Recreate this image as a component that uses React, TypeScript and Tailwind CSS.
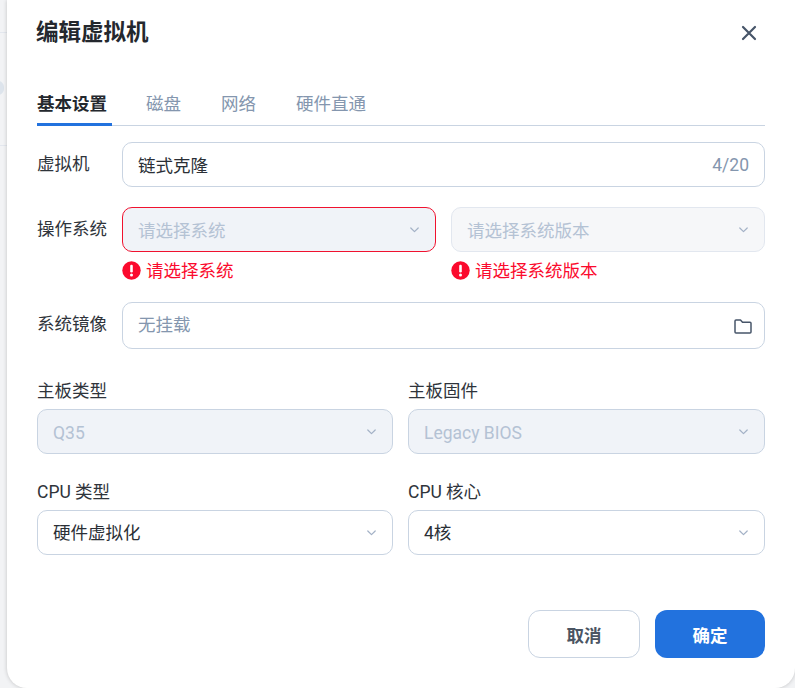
import { ReactNode } from "react";

const Chevron = () => (
  <svg width="9" height="6" viewBox="0 0 9 6" fill="none" className="shrink-0">
    <path d="M.8 1l3.7 3.7L8.2 1" stroke="#a3b1c6" strokeWidth="1.2" strokeLinecap="round" strokeLinejoin="round" />
  </svg>
);

const ErrorIcon = () => (
  <svg width="19" height="19" viewBox="0 0 19 19" className="shrink-0">
    <circle cx="9.5" cy="9.5" r="9.2" fill="#fb0a2d" />
    <rect x="8.2" y="3.8" width="2.6" height="7.6" rx="1.2" fill="#fff" />
    <circle cx="9.5" cy="14" r="1.5" fill="#fff" />
  </svg>
);

type SelectProps = {
  text: string;
  tone?: "normal" | "disabled" | "error" | "muted";
};

const Select = ({ text, tone = "normal" }: SelectProps) => {
  const box = {
    normal: "bg-white border-[#c9d4e2]",
    disabled: "bg-[#f0f3f8] border-[#c9d4e2]",
    error: "bg-[#f0f3f8] border-[#f0122f]",
    muted: "bg-[#f6f7f9] border-[#e2e7ef]",
  }[tone];
  return (
    <div className={`h-[45px] flex items-center justify-between rounded-[10px] border pl-[15px] pr-[16px] ${box}`}>
      <span className={tone === "normal" ? "pt-[1px] text-[#2b2f36]" : "pt-[3px] text-[#b4c2d4]"}>{text}</span>
      <Chevron />
    </div>
  );
};

const Field = ({ label, children }: { label: string; children: ReactNode }) => (
  <div>
    <div className="h-[24px] leading-[26px] mb-[7px] text-[#2f343b]">{label}</div>
    {children}
  </div>
);

const ErrorText = ({ text }: { text: string }) => (
  <div className="flex items-center gap-[5px] h-[38px] pb-[1px] text-[#fb0a2d]">
    <ErrorIcon />
    <span className="pt-[2px]">{text}</span>
  </div>
);

export default function App() {
  return (
    <div
      className="h-[688px] w-[795px] overflow-hidden flex bg-[#f2f3f5] text-[17.5px]"
      style={{ fontFamily: 'Roboto, "Noto Sans CJK SC", sans-serif' }}
    >
      {/* page behind the dialog */}
      <div className="w-[7px] shrink-0 overflow-hidden">
        <div className="mt-[32px] h-px bg-[#e3e7ee]" />
        <div className="mt-[48px] -ml-[8px] h-[14px] w-[12px] rounded-full bg-[#dde4ec]" />
        <div className="mt-[50px] h-px bg-[#e3e7ee]" />
      </div>

      <div className="h-[688px] w-[788px] shrink-0 bg-white rounded-b-[20px] px-[30px] shadow-[0_0_4px_rgba(0,0,0,0.2)]">
        {/* HEADER */}
        <div className="h-[64px] flex items-center justify-between">
          <h2 className="text-[22.5px] font-bold text-[#24282e] -ml-[1px] pt-[2px]">编辑虚拟机</h2>
          <svg width="16" height="16" viewBox="0 0 16 16" fill="none" className="mr-[8px] mt-[1px]">
            <path d="M2 2l12 12M14 2L2 14" stroke="#475569" strokeWidth="2.2" strokeLinecap="round" />
          </svg>
        </div>

        {/* TABS */}
        <div className="mt-[20px] h-[42px] flex border-b border-[#c9d4e2]">
          <div className="w-[75px] h-[42px] border-b-[3px] border-[#2272de] font-bold text-[#24282e] leading-[40px]">
            基本设置
          </div>
          <div className="ml-[34px] text-[#8496ae] leading-[40px]">磁盘</div>
          <div className="ml-[40px] text-[#8496ae] leading-[40px]">网络</div>
          <div className="ml-[40px] text-[#8496ae] leading-[40px]">硬件直通</div>
        </div>

        {/* FORM */}
        <div className="mt-[16px] flex h-[45px]">
          <div className="w-[85px] leading-[44px] text-[#2f343b]">虚拟机</div>
          <div className="flex-1 flex items-center justify-between rounded-[10px] border border-[#c9d4e2] px-[15px]">
            <span className="pt-[3px] text-[#2b2f36]">链式克隆</span>
            <span className="pt-[2px] text-[#8496ae]">4/20</span>
          </div>
        </div>

        <div className="mt-[20px] flex">
          <div className="w-[85px] leading-[44px] text-[#2f343b]">操作系统</div>
          <div className="flex-1 grid grid-cols-2 gap-x-[15px]">
            <Select text="请选择系统" tone="error" />
            <Select text="请选择系统版本" tone="muted" />
            <ErrorText text="请选择系统" />
            <ErrorText text="请选择系统版本" />
          </div>
        </div>

        <div className="mt-[12px] flex h-[47px]">
          <div className="w-[85px] leading-[44px] text-[#2f343b]">系统镜像</div>
          <div className="flex-1 flex items-center justify-between rounded-[10px] border border-[#c9d4e2] pl-[15px] pr-[12px]">
            <span className="text-[#8496ae]">无挂载</span>
            <svg width="18" height="16" viewBox="0 0 18 16" fill="none">
              <path
                d="M1 3a1 1 0 0 1 1-1h4.5l2 2.2H16a1 1 0 0 1 1 1V14a1 1 0 0 1-1 1H2a1 1 0 0 1-1-1V3z"
                stroke="#475569"
                strokeWidth="1.5"
                strokeLinejoin="round"
              />
            </svg>
          </div>
        </div>

        <div className="mt-[29px] grid grid-cols-[356px_357px] gap-x-[15px] gap-y-[25px]">
          <Field label="主板类型">
            <Select text="Q35" tone="disabled" />
          </Field>
          <Field label="主板固件">
            <Select text="Legacy BIOS" tone="disabled" />
          </Field>
          <Field label="CPU 类型">
            <Select text="硬件虚拟化" />
          </Field>
          <Field label="CPU 核心">
            <Select text="4核" />
          </Field>
        </div>

        {/* FOOTER */}
        <div className="mt-[55px] flex justify-end gap-[15px]">
          <button className="w-[112px] h-[48px] rounded-[12px] border border-[#c9d4e2] bg-white pt-[4px] font-bold text-[#4b5563]">
            取消
          </button>
          <button className="w-[110px] h-[48px] rounded-[12px] bg-[#2272de] pt-[4px] font-bold text-white">确定</button>
        </div>
      </div>
    </div>
  );
}
